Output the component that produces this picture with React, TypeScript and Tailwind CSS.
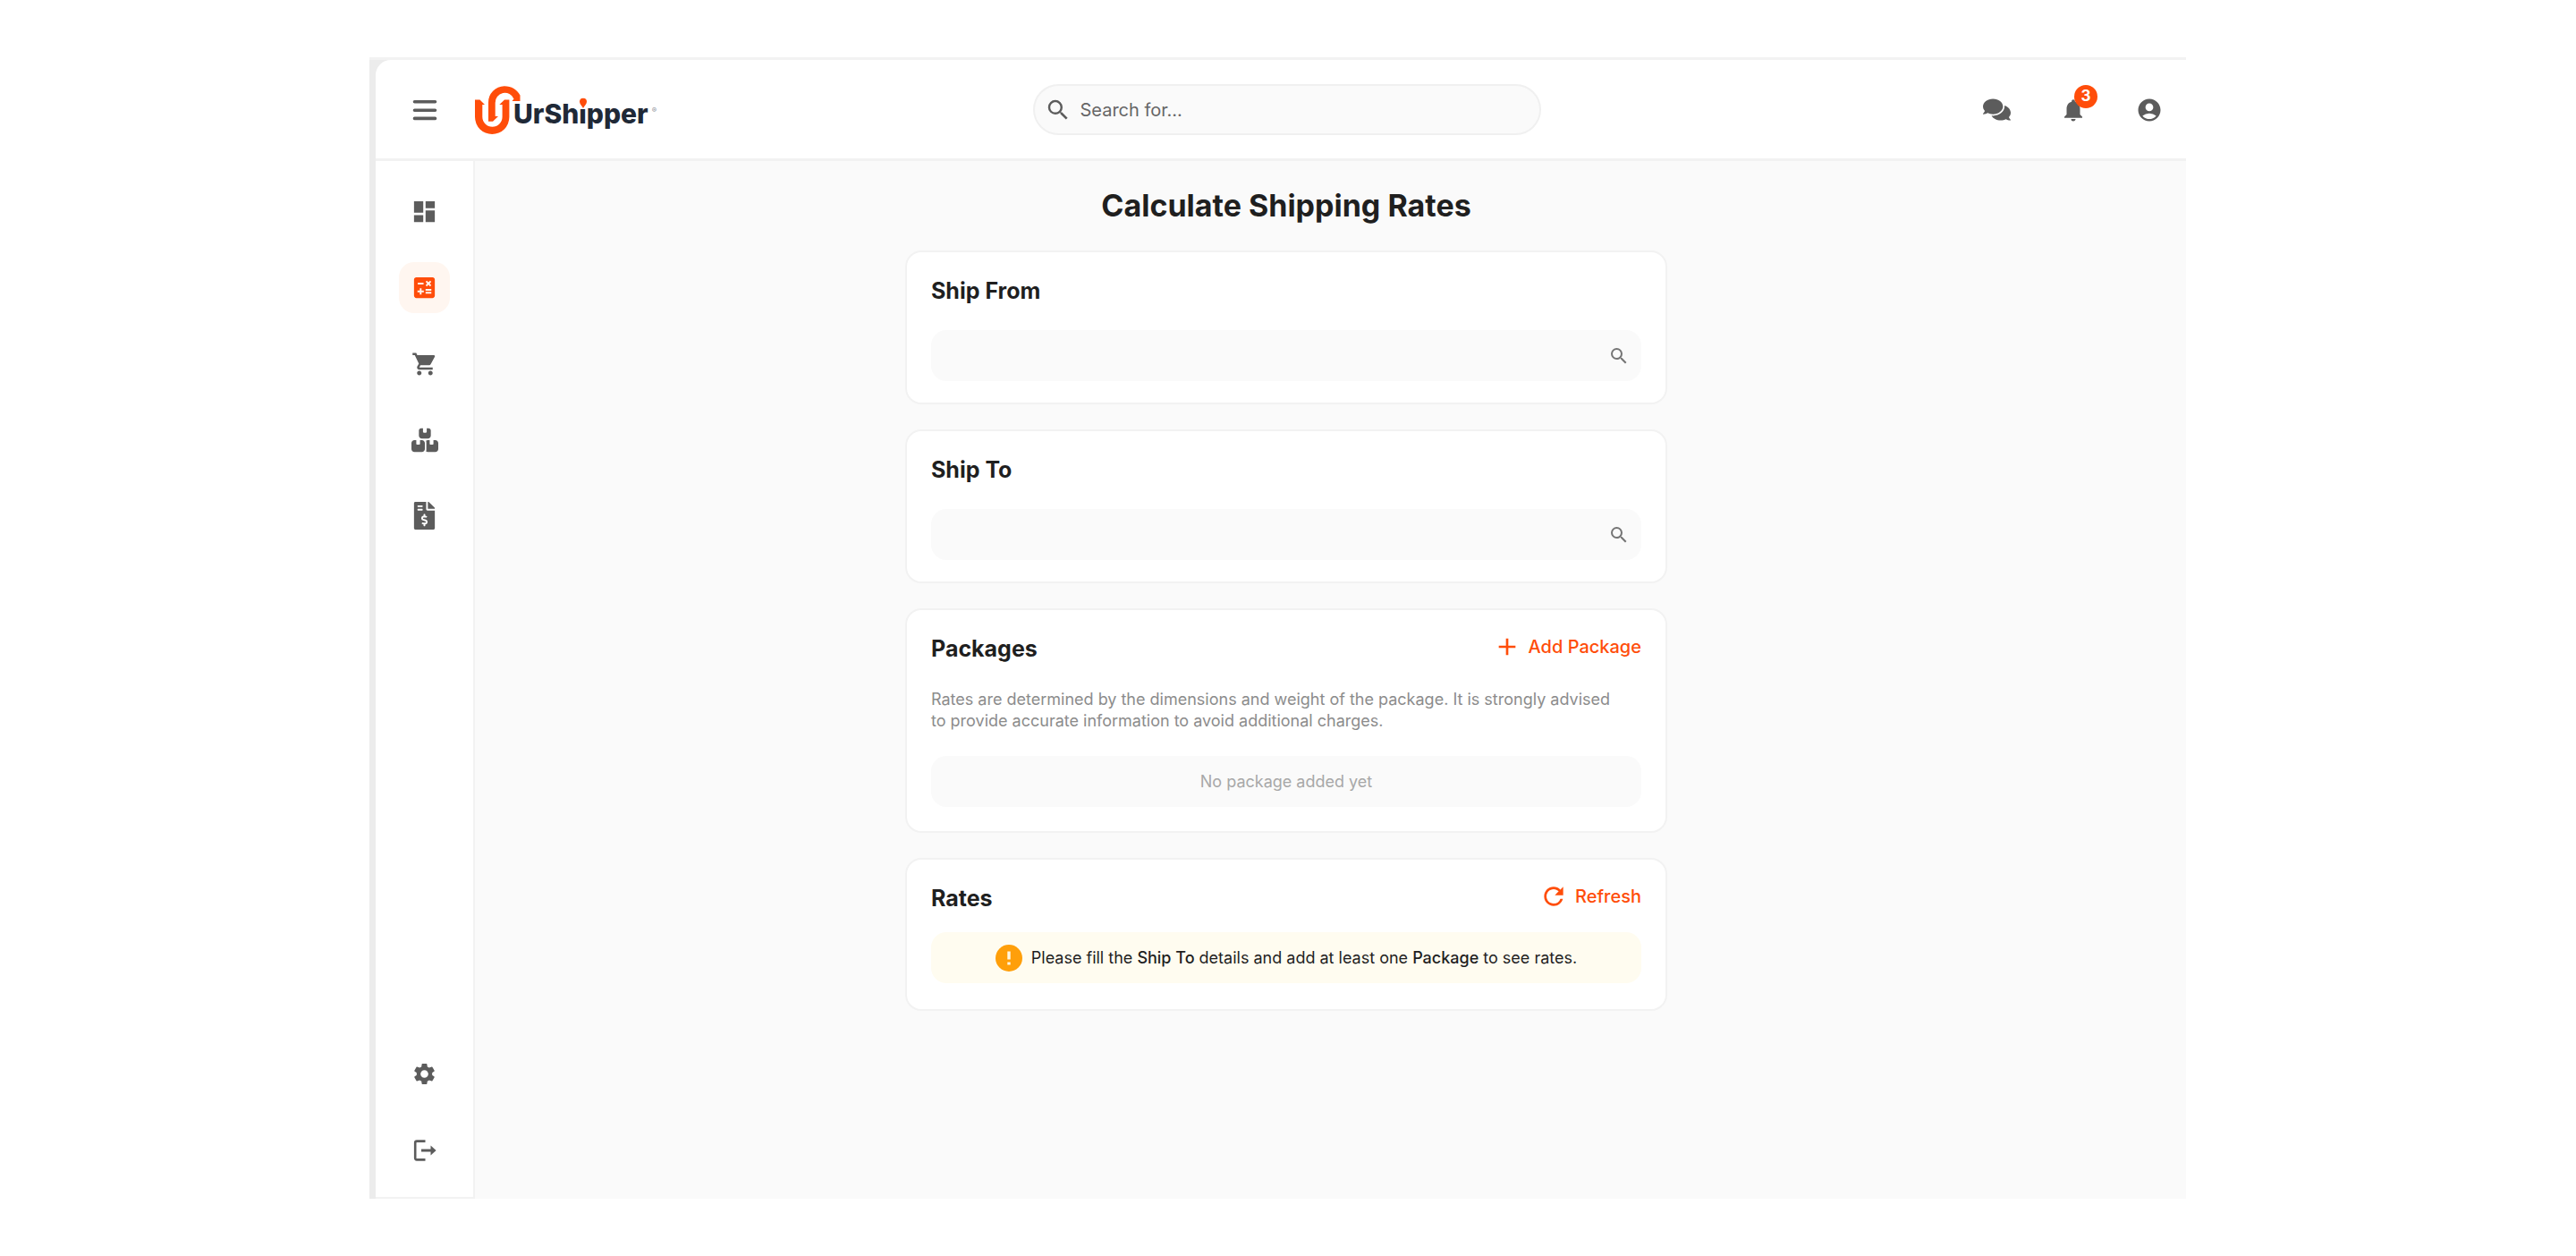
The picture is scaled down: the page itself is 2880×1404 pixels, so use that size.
import React from 'react'
import {
  MdAccountCircle,
  MdAdd,
  MdCalculate,
  MdDashboard,
  MdNotifications,
  MdRefresh,
  MdSearch,
  MdSettings,
  MdShoppingCart,
} from 'react-icons/md'
import { FaComments, FaFileInvoiceDollar } from 'react-icons/fa'
import { FaBoxesStacked } from 'react-icons/fa6'

const MenuIcon = () => (
  <svg width="28" height="28" viewBox="0 0 28 28" fill="none" stroke="currentColor" strokeWidth="3.6" strokeLinecap="round">
    <path d="M2.5 4.8H25.5M2.5 14.2H25.5M2.5 23.4H25.5" />
  </svg>
)

const LogoutIcon = () => (
  <svg width="28" height="28" viewBox="0 0 28 28" fill="none" stroke="currentColor" strokeWidth="2.6">
    <path d="M14.5 3.6H5Q3.2 3.6 3.2 5.4V22.6Q3.2 24.4 5 24.4H14.5" />
    <path d="M10 14H22" strokeWidth="3" />
    <path d="M20.5 8.5L26.6 14L20.5 19.5Z" fill="currentColor" stroke="none" />
  </svg>
)

const Logo = () => (
  <a href="#" aria-label="UrShipper home" className="flex h-[56px] items-center text-[#1f2937]">
    <svg width="51" height="54" viewBox="0 0 51 54" fill="#ff4d0a" className="shrink-0">
      <path d="M0 15.5H5.5L11 21H8.3V34.5A11.15 11.15 0 0 0 30.6 34.5V21H27.3L33 15.5H38.4V34.8A19.2 19.2 0 0 1 0 34.8Z" />
      <path d="M15 39.7V18.5A18 18 0 0 1 32.8 0.3C41 0.3 47 4.2 50.5 10.5V17H41.5L43.5 14.5A10.8 10.8 0 0 0 22.7 19V34H26L20 39.7Z" />
    </svg>
    <span className="relative -ml-2 mt-2 font-['Inter'] text-[30px] leading-[40px] font-extrabold">
      UrSh
      <span className="relative">
        i
        <svg width="10" height="13" viewBox="0 0 10 13" className="absolute top-0 left-0 bg-white">
          <path d="M5 12C3.5 9 1 7.5 1 4.8A4 4 0 0 1 9 4.8C9 7.5 6.5 9 5 12Z" fill="#ff4d0a" />
        </svg>
      </span>
      pper
    </span>
    <span className="ml-1 text-[8px] leading-[8px] text-[#8a8f98]">®</span>
  </a>
)

const navItems = [
  { label: 'Dashboard', icon: <MdDashboard size={31} /> },
  { label: 'Calculate rates', icon: <MdCalculate size={31} />, active: true },
  { label: 'Orders', icon: <MdShoppingCart size={30} /> },
  { label: 'Shipments', icon: <FaBoxesStacked size={30} /> },
  { label: 'Invoices', icon: <FaFileInvoiceDollar size={31} /> },
]

const footerItems = [
  { label: 'Settings', icon: <MdSettings size={29} /> },
  { label: 'Log out', icon: <LogoutIcon /> },
]

const NavLink = ({ label, icon, active }: { label: string; icon: React.ReactNode; active?: boolean }) => (
  <a
    href="#"
    aria-label={label}
    className={`flex h-[57px] w-[57px] items-center justify-center rounded-[17px] ${
      active ? 'bg-[#fff6f0] text-[#ff4d0a]' : 'text-[#5c5c5c]'
    }`}
  >
    {icon}
  </a>
)

const IconButton = ({ label, children }: { label: string; children: React.ReactNode }) => (
  <button type="button" aria-label={label} className="relative flex h-[57px] w-[57px] items-center justify-center">
    {children}
  </button>
)

const Card = ({ children, className = 'pb-6' }: { children: React.ReactNode; className?: string }) => (
  <section className={`rounded-[18px] border-2 border-[#f2f2f2] bg-white px-[27px] pt-[25px] ${className}`}>
    {children}
  </section>
)

const AddressCard = ({ id, title }: { id: string; title: string }) => (
  <Card>
    <label htmlFor={id} className="block text-[25px] leading-9 font-bold">
      {title}
    </label>
    <div className="mt-[26px] flex h-[57px] items-center rounded-[17px] bg-[#fafafa] pr-[13px] pl-5">
      <input id={id} type="text" className="min-w-0 flex-1 bg-transparent text-[20px] outline-none" />
      <MdSearch size={24} className="text-[#757575]" />
    </div>
  </Card>
)

const CardHeader = ({ title, action, icon }: { title: string; action: string; icon: React.ReactNode }) => (
  <div className="flex h-9 items-start justify-between">
    <h2 className="text-[25px] leading-9 font-bold">{title}</h2>
    <button type="button" className="flex items-center gap-2 text-[20px] leading-8 font-medium text-[#ff4d0a]">
      {icon}
      {action}
    </button>
  </div>
)

const App = () => {
  return (
    <div className="flex min-h-screen bg-white py-16 pr-[436px] pl-[413px] font-['Inter',sans-serif] text-[#1f1f1f]">
      <div className="flex min-w-0 flex-1 border-t-[3px] border-[#f2f2f2] bg-[#ececec] pl-[7px]">
        <div className="flex min-w-0 flex-1 flex-col overflow-hidden rounded-tl-[17px] bg-white">
          <header className="grid grid-cols-[1fr_568px_1fr] items-center border-b-[3px] border-[#f2f2f2] pt-[27px] pr-[13px] pb-[26px] pl-[26px] text-[#5c5c5c]">
            <div className="flex items-center gap-7">
              <IconButton label="Menu">
                <MenuIcon />
              </IconButton>
              <Logo />
            </div>

            <label className="flex h-[57px] items-center gap-[10px] rounded-full border-2 border-[#f0f0f0] bg-[#fafafa] pr-5 pl-[11px]">
              <MdSearch size={30} />
              <input
                type="search"
                aria-label="Search"
                placeholder="Search for..."
                className="min-w-0 flex-1 bg-transparent text-[20px] outline-none placeholder:text-[#666666]"
              />
            </label>

            <div className="flex items-center justify-end gap-7">
              <IconButton label="Messages">
                <FaComments size={31} />
              </IconButton>
              <IconButton label="Notifications">
                <MdNotifications size={30} />
                <span className="absolute top-px right-px flex h-[26px] w-[26px] items-center justify-center rounded-full bg-[#ff4d0a] text-[17px] font-bold text-white">
                  3
                </span>
              </IconButton>
              <IconButton label="Account">
                <MdAccountCircle size={30} />
              </IconButton>
            </div>
          </header>

          <div className="flex flex-1">
            <nav className="flex flex-col justify-between border-r-2 border-b-2 border-[#f2f2f2] px-[26px] pt-7 pb-6">
              <div className="flex flex-col gap-7">
                {navItems.map((item) => (
                  <NavLink key={item.label} {...item} />
                ))}
              </div>
              <div className="flex flex-col gap-7">
                {footerItems.map((item) => (
                  <NavLink key={item.label} {...item} />
                ))}
              </div>
            </nav>

            <main className="flex-1 bg-[#fafafa] pt-[26px] pr-[99px]">
              <h1 className="text-center text-[34px] leading-[48px] font-bold">Calculate Shipping Rates</h1>

              <div className="mx-auto mt-[26px] flex max-w-[852px] flex-col gap-7">
                <AddressCard id="ship-from" title="Ship From" />
                <AddressCard id="ship-to" title="Ship To" />

                <Card className="pb-[27px]">
                  <CardHeader title="Packages" action="Add Package" icon={<MdAdd size={32} />} />
                  <p className="mt-[27px] pr-5 text-[18px] leading-6 text-[#8c8c8c]">
                    Rates are determined by the dimensions and weight of the package. It is strongly advised to provide
                    accurate information to avoid additional charges.
                  </p>
                  <p className="mt-[27px] rounded-[17px] bg-[#fafafa] text-center text-[18px] leading-[57px] text-[#a8a8a8]">
                    No package added yet
                  </p>
                </Card>

                <Card className="pb-[29px]">
                  <CardHeader title="Rates" action="Refresh" icon={<MdRefresh size={32} />} />
                  <div className="mt-5 flex h-[57px] items-center justify-center gap-[10px] rounded-[17px] bg-[#fffcf0]">
                    <svg width="30" height="30" viewBox="0 0 30 30">
                      <circle cx="15" cy="15" r="15" fill="#ff9f0a" />
                      <path d="M15 7.5V16.5M15 19.5V22.5" stroke="#fff6e0" strokeWidth="3.4" />
                    </svg>
                    <p className="text-[18px] leading-7">
                      Please fill the <span className="font-medium">Ship To</span> details and add at least one{' '}
                      <span className="font-medium">Package</span> to see rates.
                    </p>
                  </div>
                </Card>
              </div>
            </main>
          </div>
        </div>
      </div>
    </div>
  )
}

export default App
